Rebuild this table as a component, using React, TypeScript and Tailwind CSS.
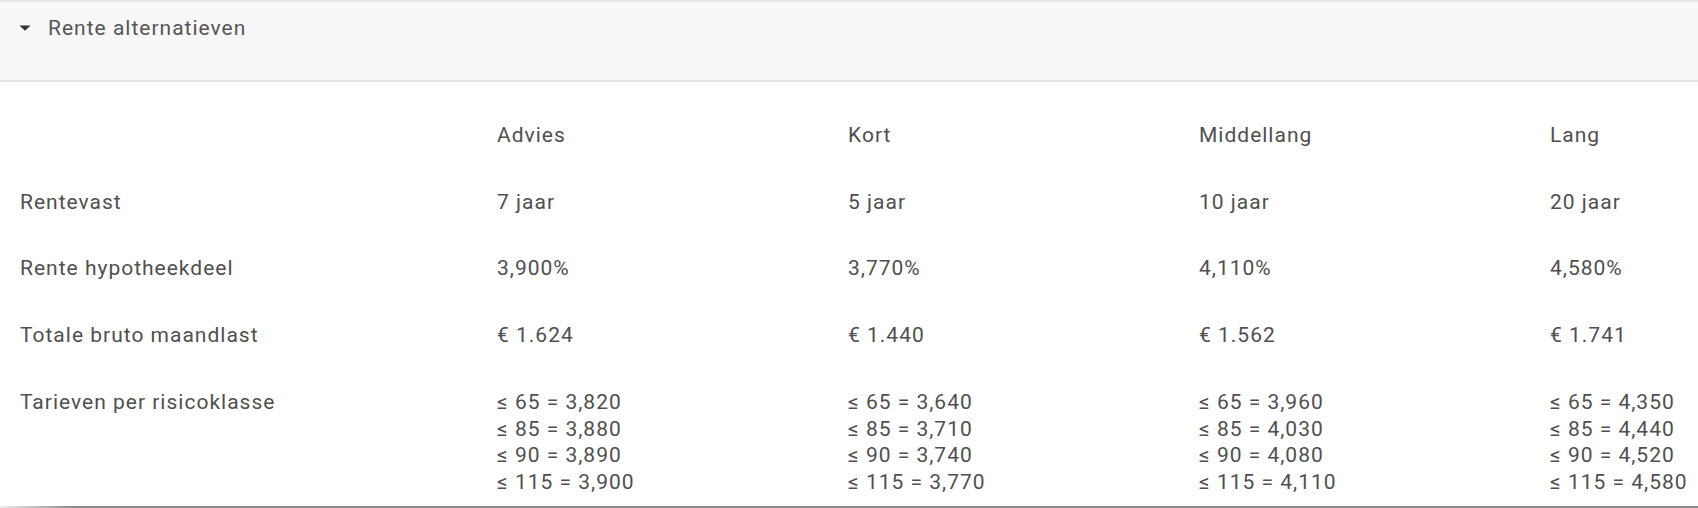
import React from 'react';

const columns = ['Advies', 'Kort', 'Middellang', 'Lang'];

const rows: { label: string; values: string[] }[] = [
  { label: 'Rentevast', values: ['7 jaar', '5 jaar', '10 jaar', '20 jaar'] },
  { label: 'Rente hypotheekdeel', values: ['3,900%', '3,770%', '4,110%', '4,580%'] },
  { label: 'Totale bruto maandlast', values: ['€ 1.624', '€ 1.440', '€ 1.562', '€ 1.741'] },
];

const tarieven = [
  ['≤ 65 = 3,820', '≤ 85 = 3,880', '≤ 90 = 3,890', '≤ 115 = 3,900'],
  ['≤ 65 = 3,640', '≤ 85 = 3,710', '≤ 90 = 3,740', '≤ 115 = 3,770'],
  ['≤ 65 = 3,960', '≤ 85 = 4,030', '≤ 90 = 4,080', '≤ 115 = 4,110'],
  ['≤ 65 = 4,350', '≤ 85 = 4,440', '≤ 90 = 4,520', '≤ 115 = 4,580'],
];

const gridCols = 'grid grid-cols-[477px_351px_351px_351px_1fr]';

const App: React.FC = () => {
  return (
    <div className="w-[1698px] h-[508px] overflow-hidden bg-white font-['Roboto',sans-serif] text-[21px] leading-[26.7px] tracking-[1px] text-[#4f4f4f]">
      {/* collapsible header */}
      <div className="h-[82px] border-t-2 border-b-2 border-t-[#e6e6e6] border-b-[#e4e4e4] bg-[#f8f8f8] pt-[13px]">
        <div className="flex items-center">
          <div className="w-[48px] flex justify-center pl-[1px]">
            <svg width="12" height="6" viewBox="0 0 12 6">
              <path d="M0.5 0.5 L11.5 0.5 L6 5.8 Z" fill="#333333" />
            </svg>
          </div>
          <span className="text-[#555555]">Rente alternatieven</span>
        </div>
      </div>

      {/* table */}
      <div className="h-[424px] pl-[20px] pt-[40px] flex flex-col gap-[40px]">
        <div className={gridCols}>
          <div />
          {columns.map((c) => (
            <div key={c}>{c}</div>
          ))}
        </div>
        {rows.map((r) => (
          <div key={r.label} className={gridCols}>
            <div>{r.label}</div>
            {r.values.map((v, i) => (
              <div key={i}>{v}</div>
            ))}
          </div>
        ))}
        <div className={gridCols}>
          <div>Tarieven per risicoklasse</div>
          {tarieven.map((lines, i) => (
            <div key={i} className="flex flex-col">
              {lines.map((l) => (
                <span key={l}>{l}</span>
              ))}
            </div>
          ))}
        </div>
      </div>
      <div className="h-[2px] bg-[linear-gradient(to_right,#ececec,#8a8a8a_75px)]" />
    </div>
  );
};

export default App;
